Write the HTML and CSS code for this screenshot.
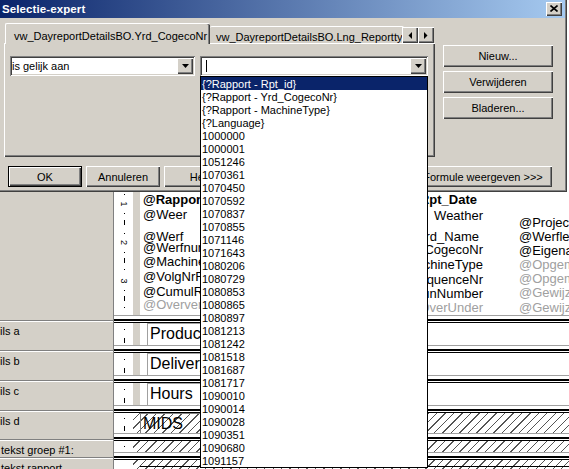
FILE: index.html
```html
<!DOCTYPE html>
<html>
<head>
<meta charset="utf-8">
<title>Selectie-expert</title>
<link rel="stylesheet" href="styles.css">
</head>
<body>
<div class="designer">
  <div class="side">
    <div class="side-sec side-top"></div>
    <div class="side-sec side-a">ils a</div>
    <div class="side-sec side-b">ils b</div>
    <div class="side-sec side-c">ils c</div>
    <div class="side-sec side-d">ils d</div>
    <div class="side-sec side-g indent">tekst groep #1:</div>
    <div class="side-sec side-r indent">tekst rapport</div>
  </div>
  <div class="main">
    <div class="sec sec1">
      <div class="ruler">
        <svg width="20" height="315" viewBox="0 0 20 315">
          <rect x="10" y="194" width="1" height="1" fill="#000"/>
          <text x="10" y="204" class="rnum" transform="rotate(90 10 204)">1</text>
          <rect x="10" y="213" width="1" height="1" fill="#000"/>
          <rect x="10" y="220" width="1" height="5" fill="#000"/>
          <rect x="10" y="233" width="1" height="1" fill="#000"/>
          <text x="10" y="242.5" class="rnum" transform="rotate(90 10 242.5)">2</text>
          <rect x="10" y="252" width="1" height="1" fill="#000"/>
          <rect x="10" y="258" width="1" height="5" fill="#000"/>
          <rect x="10" y="269" width="1" height="1" fill="#000"/>
          <text x="10" y="281" class="rnum" transform="rotate(90 10 281)">3</text>
          <rect x="10" y="290" width="1" height="1" fill="#000"/>
          <rect x="10" y="296" width="1" height="5" fill="#000"/>
          <rect x="10" y="307" width="1" height="1" fill="#000"/>
        </svg>
      </div>
      <div class="gutter"></div>
      <div class="content canvas">
        <div class="fld b c1 r1">@RapportTitel</div>
        <div class="fld c1 r2">@Weer</div>
        <div class="fld c1 r3">@Werf</div>
        <div class="fld c1 r4">@Werfnummer</div>
        <div class="fld c1 r5">@MachineType</div>
        <div class="fld c1 r6">@VolgNrRapport</div>
        <div class="fld c1 r7">@CumulRapport</div>
        <div class="fld g c1 r8">@Oververbruik</div>

        <div class="fld b c2 c2d q1">@Rpt_Date</div>
        <div class="fld c2 q2">Weather</div>
        <div class="fld c2 c2s q3">@Yrd_Name</div>
        <div class="fld c2 q4">@Yrd_CogecoNr</div>
        <div class="fld c2 q5">@MachineType</div>
        <div class="fld c2 q6">@SequenceNr</div>
        <div class="fld c2 q7">@RunNumber</div>
        <div class="fld g c2 q8">@OverUnder</div>

        <div class="fld c3 p1">@Project</div>
        <div class="fld c3 p2">@Werfleider</div>
        <div class="fld c3 p3">@Eigenaar</div>
        <div class="fld g c3 p4">@Opgemaakt door</div>
        <div class="fld g c3 p5">@Opgemaakt op</div>
        <div class="fld g c3 p6">@Gewijzigd door</div>
        <div class="fld g c3 p7">@Gewijzigd op</div>
      </div>
    </div>
    <div class="divider"></div>

    <div class="sec sec-a">
      <div class="ruler"><svg width="20" height="22" viewBox="0 0 20 22"><rect x="10" y="6" width="1" height="1" fill="#000"/><rect x="10" y="15" width="1" height="5" fill="#000"/></svg></div>
      <div class="gutter"></div>
      <div class="content"><div class="tbox">Production</div></div>
    </div>
    <div class="divider"></div>

    <div class="sec sec-b">
      <div class="ruler"><svg width="20" height="22" viewBox="0 0 20 22"><rect x="10" y="6" width="1" height="1" fill="#000"/><rect x="10" y="15" width="1" height="5" fill="#000"/></svg></div>
      <div class="gutter"></div>
      <div class="content"><div class="tbox">Delivery</div></div>
    </div>
    <div class="divider"></div>

    <div class="sec sec-c">
      <div class="ruler"><svg width="20" height="22" viewBox="0 0 20 22"><rect x="10" y="6" width="1" height="1" fill="#000"/><rect x="10" y="15" width="1" height="5" fill="#000"/></svg></div>
      <div class="gutter"></div>
      <div class="content"><div class="tbox">Hours</div></div>
    </div>
    <div class="divider"></div>

    <div class="sec sec-d hatched">
      <div class="ruler"><svg width="20" height="20" viewBox="0 0 20 20"><rect x="10" y="5" width="1" height="1" fill="#000"/><rect x="10" y="13" width="1" height="5" fill="#000"/></svg></div>
      <div class="gutter"></div>
      <div class="content"><div class="tbox tbox-h">MIDS</div></div>
    </div>
    <div class="divider"></div>

    <div class="sec sec-g hatched">
      <div class="ruler"><svg width="20" height="11" viewBox="0 0 20 11"><rect x="10" y="5" width="1" height="1" fill="#000"/></svg></div>
      <div class="gutter"></div>
      <div class="content"></div>
    </div>
    <div class="divider"></div>

    <div class="sec sec-r hatched">
      <div class="ruler"></div>
      <div class="gutter"></div>
      <div class="content"></div>
    </div>
  </div>
</div>

<div class="dialog">
  <div class="titlebar">
    <span class="title">Selectie-expert</span>
    <span class="closebtn"><svg width="8" height="7" viewBox="0 0 8 7"><path d="M0.5 0.5L7.5 6.5M7.5 0.5L0.5 6.5" stroke="#000" stroke-width="1.6" fill="none"/></svg></span>
  </div>
  <div class="dbody">
    <div class="tabarea">
      <div class="tabs">
        <div class="tab tab-sel">vw_DayreportDetailsBO.Yrd_CogecoNr</div>
        <div class="tab tab-2">vw_DayreportDetailsBO.Lng_Reporttype</div>
        <div class="tabscroll">
          <span class="sbtn"><svg width="4" height="7" viewBox="0 0 4 7"><polygon points="4,0 4,7 0.5,3.5" fill="#000"/></svg></span>
          <span class="sbtn"><svg width="4" height="7" viewBox="0 0 4 7"><polygon points="0,0 0,7 3.5,3.5" fill="#000"/></svg></span>
        </div>
      </div>
      <div class="panel">
        <div class="combo combo-l">
          <span class="ctext">is gelijk aan</span>
          <span class="cbtn"><svg width="7" height="4" viewBox="0 0 7 4"><polygon points="0,0 7,0 3.5,4" fill="#000"/></svg></span>
        </div>
        <div class="combo combo-r">
          <span class="caret"></span>
          <span class="cbtn"><svg width="7" height="4" viewBox="0 0 7 4"><polygon points="0,0 7,0 3.5,4" fill="#000"/></svg></span>
          <div class="droplist">
            <div class="item sel">{?Rapport - Rpt_id}</div>
            <div class="item">{?Rapport - Yrd_CogecoNr}</div>
            <div class="item">{?Rapport - MachineType}</div>
            <div class="item">{?Language}</div>
            <div class="item">1000000</div>
            <div class="item">1000001</div>
            <div class="item">1051246</div>
            <div class="item">1070361</div>
            <div class="item">1070450</div>
            <div class="item">1070592</div>
            <div class="item">1070837</div>
            <div class="item">1070855</div>
            <div class="item">1071146</div>
            <div class="item">1071643</div>
            <div class="item">1080206</div>
            <div class="item">1080729</div>
            <div class="item">1080853</div>
            <div class="item">1080865</div>
            <div class="item">1080897</div>
            <div class="item">1081213</div>
            <div class="item">1081242</div>
            <div class="item">1081518</div>
            <div class="item">1081687</div>
            <div class="item">1081717</div>
            <div class="item">1090010</div>
            <div class="item">1090014</div>
            <div class="item">1090028</div>
            <div class="item">1090351</div>
            <div class="item">1090680</div>
            <div class="item">1091157</div>
          </div>
        </div>
      </div>
    </div>
    <div class="sidebtns">
      <div class="btn">Nieuw...</div>
      <div class="btn">Verwijderen</div>
      <div class="btn">Bladeren...</div>
    </div>
  </div>
  <div class="dbottom">
    <div class="btn btn-b btn-def">OK</div>
    <div class="btn btn-b">Annuleren</div>
    <div class="btn btn-b">Help</div>
    <div class="btn btn-f">Formule weergeven &gt;&gt;&gt;</div>
  </div>
</div>
</body>
</html>
```
FILE: styles.css
```css
* { box-sizing: border-box; }
html, body { margin: 0; padding: 0; }
body {
  width: 569px;
  height: 469px;
  overflow: hidden;
  position: relative;
  background: #fff;
  font-family: "Liberation Sans", Arial, sans-serif;
  font-size: 11px;
  color: #000;
}

/* ---------- report designer (background) ---------- */
.designer { display: flex; width: 569px; height: 469px; }

.side {
  width: 113px;
  flex: none;
  background: #d4d0c8;
  display: flex;
  flex-direction: column;
}
.side-sec {
  flex: none;
  border-top: 1px solid #808080;
  box-shadow: inset 0 1px 0 #fff;
  padding: 4px 0 0 0;
  line-height: 13px;
  font-size: 11px;
  white-space: nowrap;
  overflow: hidden;
}
.side-sec.indent { padding-left: 1px; }
.side-top { height: 320px; border-top: none; box-shadow: none; }
.side-a, .side-b, .side-c { height: 30px; }
.side-d { height: 29px; }
.side-g { height: 18px; }
.side-r { flex: 1; }

.main {
  flex: 1;
  min-width: 0;
  display: flex;
  flex-direction: column;
  background: #fff;
  border-left: 1px solid #808080;
}
.sec { display: flex; flex: none; }
.sec1 { height: 315px; }
.sec-a, .sec-b, .sec-c { height: 22px; }
.sec-d { height: 20px; }
.sec-g { height: 11px; }
.sec-r { flex: 1; position: relative; }
.sec-r .content { border-bottom: 1px solid #000; height: 7px; flex: 1; }

.ruler { width: 19px; flex: none; background: #fff; }
.ruler svg { display: block; }
.rnum {
  font-family: "Liberation Sans", Arial, sans-serif;
  font-size: 9px;
  text-anchor: middle;
  dominant-baseline: central;
  fill: #000;
}
.gutter { width: 7px; flex: none; background: #d4d0c8; }
.content { flex: 1; position: relative; background: #fff; overflow: hidden; }

.hatched {
  background: repeating-linear-gradient(-45deg, #fff 0 5px, #555 5px 6px);
}
.hatched .gutter, .hatched .content { background: transparent; }
.hatched .gutter { width: 2px; }
.hatched .content { margin-left: 5px; }
.hatched .ruler { background: #fff; }

.divider {
  height: 8px;
  flex: none;
  background: linear-gradient(to bottom,
    #a0a0a0 0 1px, transparent 1px 4px,
    #000 4px 6px, transparent 6px 7px, #000 7px 8px);
}

/* canvas fields (positions are the design itself) */
.fld {
  position: absolute;
  font: 13px/15px "Liberation Sans", Arial, sans-serif;
  white-space: nowrap;
  color: #000;
}
.fld.b { font-weight: bold; }
.fld.g { color: #a0a0a0; }
.c1 { left: 3px; }
.c2 { right: 86px; }
.c2s { right: 90px; }
.c2d { right: 92px; }
.c3 { left: 379px; }
.r1 { top: 192px; } .r2 { top: 207px; } .r3 { top: 229px; } .r4 { top: 240px; }
.r5 { top: 254px; } .r6 { top: 269px; } .r7 { top: 284px; } .r8 { top: 297px; }
.q1 { top: 192px; } .q2 { top: 208px; } .q3 { top: 229px; } .q4 { top: 242px; }
.q5 { top: 257px; } .q6 { top: 272px; } .q7 { top: 286px; } .q8 { top: 300px; }
.p1 { top: 215px; } .p2 { top: 229px; } .p3 { top: 243px; } .p4 { top: 257px; }
.p5 { top: 271px; } .p6 { top: 285px; } .p7 { top: 300px; }

.tbox {
  margin-left: 7px;
  width: 200px;
  height: 22px;
  border: 1px solid #a0a0a0;
  border-right: none;
  border-bottom: none;
  padding-left: 2px;
  font-size: 16px;
  line-height: 19px;
  white-space: nowrap;
  overflow: hidden;
}
.tbox-h { margin-left: 0; border-color: #808080; height: 20px; }

/* ---------- dialog ---------- */
.dialog {
  position: absolute;
  left: 0;
  top: 0;
  width: 567px;
  height: 192px;
  background: #d4d0c8;
  box-shadow: inset -1px -1px #404040, inset -2px -2px #808080;
  z-index: 5;
}
.titlebar {
  height: 18px;
  width: 565px;
  background: linear-gradient(to right, #0a246a, #a6caf0);
  display: flex;
  align-items: center;
  justify-content: space-between;
  padding: 0 3px 0 2px;
}
.title {
  color: #fff;
  font-weight: bold;
  font-size: 11.5px;
  letter-spacing: 0.1px;
}
.closebtn {
  width: 16px;
  height: 14px;
  background: #d4d0c8;
  box-shadow: inset 1px 1px #fff, inset -1px -1px #404040, inset -2px -2px #808080;
  display: flex;
  align-items: center;
  justify-content: center;
  padding-bottom: 1px;
}
.closebtn svg { display: block; }

.dbody { display: flex; padding: 5px 0 0 4px; }
.tabarea { width: 431px; flex: none; }
.tabs {
  height: 20px;
  display: flex;
  align-items: flex-end;
  position: relative;
}
.tab {
  white-space: nowrap;
  overflow: hidden;
  font-size: 11px;
  background: #d4d0c8;
}
.tab-sel {
  width: 205px;
  height: 21px;
  margin-left: 1px;
  margin-bottom: -1px;
  position: relative;
  z-index: 2;
  border-top: 1px solid #fff;
  border-left: 1px solid #fff;
  border-radius: 2px 2px 0 0;
  box-shadow: inset -1px 0 #404040, inset -2px 0 #808080;
  padding: 6px 0 0 8px;
  line-height: 13px;
}
.tab-2 {
  width: 194px;
  height: 17px;
  border-top: 1px solid #fff;
  border-radius: 2px 2px 0 0;
  padding: 4px 0 0 6px;
  line-height: 12px;
}
.tabscroll {
  position: absolute;
  left: 398px;
  top: 4px;
  display: flex;
  z-index: 3;
}
.sbtn {
  width: 16px;
  height: 16px;
  background: #d4d0c8;
  box-shadow: inset 1px 1px #fff, inset -1px -1px #404040, inset -2px -2px #808080;
  display: flex;
  align-items: center;
  justify-content: center;
}
.sbtn svg { display: block; }

.panel {
  height: 114px;
  border-top: 1px solid #fff;
  border-left: 1px solid #fff;
  box-shadow: inset -1px -1px #404040, inset -2px -2px #808080;
  padding: 12px 0 0 5px;
  display: flex;
  gap: 5px;
  align-items: flex-start;
}
.combo {
  height: 20px;
  position: relative;
  background: #fff;
  box-shadow: inset 1px 1px #808080, inset -1px -1px #fff, inset 2px 2px #404040, inset -2px -2px #d4d0c8;
  padding: 2px 0 0 2px;
  line-height: 16px;
  font-size: 11px;
  white-space: nowrap;
}
.combo-l { width: 185px; }
.combo-r { width: 228px; }
.cbtn {
  position: absolute;
  right: 2px;
  top: 2px;
  width: 16px;
  height: 16px;
  background: #d4d0c8;
  box-shadow: inset 1px 1px #fff, inset -1px -1px #404040, inset -2px -2px #808080;
  display: flex;
  align-items: center;
  justify-content: center;
}
.cbtn svg { display: block; }
.caret {
  position: absolute;
  left: 6px;
  top: 4px;
  width: 1px;
  height: 12px;
  background: #000;
}
.droplist {
  position: absolute;
  left: 0;
  top: 20px;
  width: 228px;
  border: 1px solid #000;
  background: #fff;
  z-index: 10;
}
.item {
  height: 13px;
  padding: 1px 0 0 1px;
  line-height: 12px;
  font-size: 11px;
  white-space: nowrap;
}
.item.sel { background: #0a246a; color: #fff; }

.sidebtns {
  margin-left: 8px;
  padding-top: 22px;
  width: 110px;
  display: flex;
  flex-direction: column;
  gap: 4px;
}
.btn {
  height: 22px;
  background: #d4d0c8;
  box-shadow: inset 1px 1px #fff, inset -1px -1px #404040, inset -2px -2px #808080;
  display: flex;
  align-items: center;
  justify-content: center;
  font-size: 11px;
  white-space: nowrap;
}
.dbottom {
  display: flex;
  gap: 4px;
  margin-top: 9px;
  padding-left: 8px;
}
.btn-b { width: 74px; height: 21px; }
.btn-def {
  border: 1px solid #000;
  box-shadow: inset 1px 1px #fff, inset -1px -1px #404040, inset -2px -2px #808080;
}
.btn-f { width: 138px; height: 21px; margin-left: 172px; }
```
